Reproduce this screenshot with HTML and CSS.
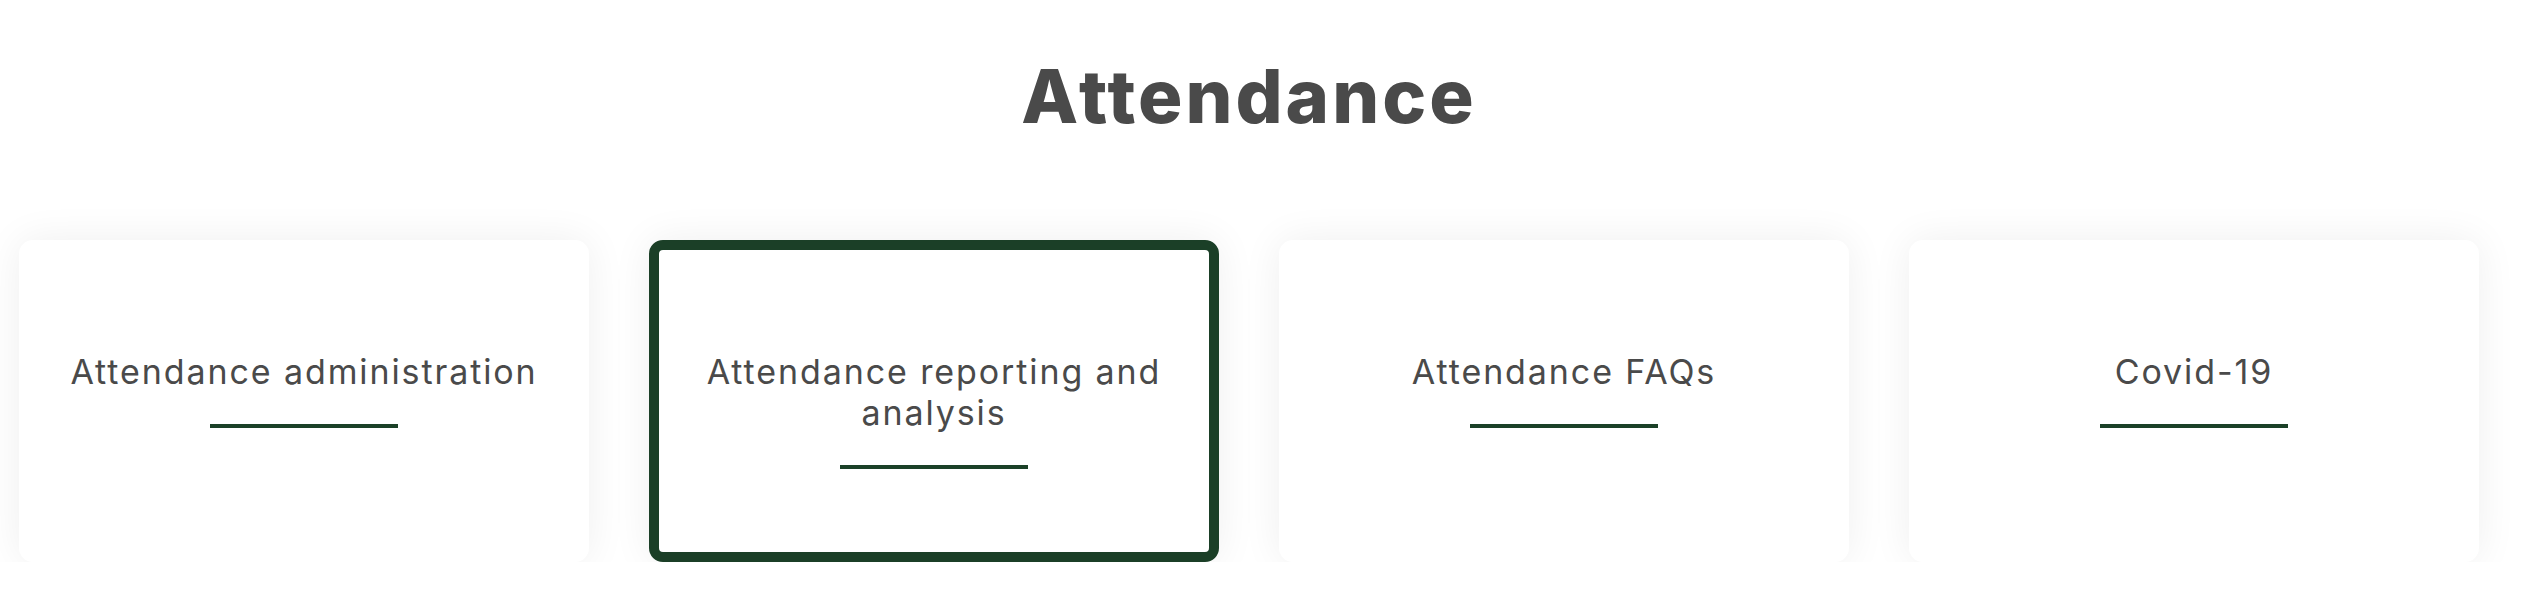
FILE: index.html
```html
<!DOCTYPE html>
<html lang="en">
<head>
<meta charset="utf-8">
<title>Attendance</title>
<link rel="stylesheet" href="styles.css">
</head>
<body>
<main class="page">
  <h1 class="title">Attendance</h1>
  <div class="cards">
    <a class="card" href="#">
      <span class="card-label">Attendance administration</span>
      <span class="card-rule"></span>
    </a>
    <a class="card card-active" href="#">
      <span class="card-label">Attendance reporting and analysis</span>
      <span class="card-rule"></span>
    </a>
    <a class="card" href="#">
      <span class="card-label">Attendance FAQs</span>
      <span class="card-rule"></span>
    </a>
    <a class="card" href="#">
      <span class="card-label">Covid-19</span>
      <span class="card-rule"></span>
    </a>
  </div>
</main>
</body>
</html>
```

FILE: styles.css
```css
* { box-sizing: border-box; }
html, body { margin: 0; padding: 0; background: #ffffff; }
body {
  font-family: Inter, "Liberation Sans", Arial, sans-serif;
  color: #4a4a4a;
}
.page {
  padding: 52px 47px 0 19px;
}
.title {
  margin: 0;
  text-align: center;
  font-size: 74px;
  line-height: 88px;
  font-weight: 800;
  color: #4a4a4a;
  letter-spacing: 3px;
}
.cards {
  margin-top: 100px;
  display: grid;
  grid-template-columns: repeat(4, 570px);
  column-gap: 60px;
}
.card {
  min-height: 322px;
  background: #ffffff;
  border: 10px solid #ffffff;
  border-radius: 14px;
  box-shadow: 0 0 40px rgba(0, 0, 0, 0.065);
  padding: 101px 16px 40px;
  display: flex;
  flex-direction: column;
  align-items: center;
  text-decoration: none;
  color: #4a4a4a;
}
.card-active {
  border-color: #1b3f27;
}
.card-label {
  font-size: 34px;
  line-height: 41px;
  font-weight: 400;
  text-align: center;
  letter-spacing: 1.9px;
  max-width: 500px;
}
.card-rule {
  display: block;
  width: 188px;
  height: 4px;
  margin-top: 32px;
  background: #1b4128;
}
```
